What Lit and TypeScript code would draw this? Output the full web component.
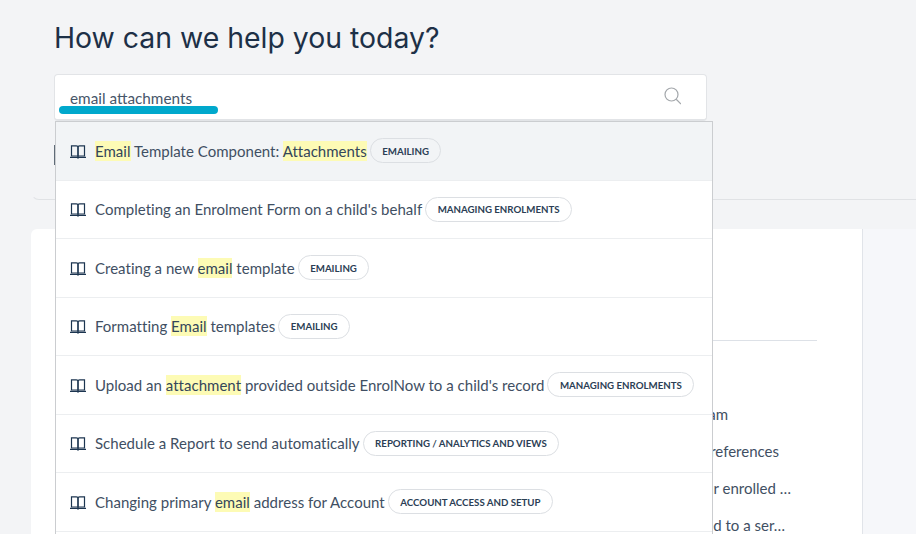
import { LitElement, css, html } from 'lit'
import { customElement } from 'lit/decorators.js'

interface Result {
	title: string
	tag: string
}

const results: Result[] = [
	{ title: 'Email Template Component: Attachments', tag: 'Emailing' },
	{ title: "Completing an Enrolment Form on a child's behalf", tag: 'Managing Enrolments' },
	{ title: 'Creating a new email template', tag: 'Emailing' },
	{ title: 'Formatting Email templates', tag: 'Emailing' },
	{ title: "Upload an attachment provided outside EnrolNow to a child's record", tag: 'Managing Enrolments' },
	{ title: 'Schedule a Report to send automatically', tag: 'Reporting / Analytics and Views' },
	{ title: 'Changing primary email address for Account', tag: 'Account Access and Setup' },
]

// end = right edge of the text on the page, the start of each line sits under the dropdown
const articles = [
	{ text: 'Enrolling a child into a program', end: 728 },
	{ text: 'Your communication preferences', end: 779 },
	{ text: 'Viewing details of your enrolled …', end: 791 },
	{ text: 'Forms that are attached to a ser…', end: 785 },
]

const bookIcon = html`
	<svg class="book" viewBox="0 0 16 14" fill="none" stroke="currentColor" stroke-width="1.2">
		<path d="M1.5 .8H6.4C7.4 .8 8 1.4 8 2.2V11H1.5z" />
		<path d="M14.5 .8H9.6C8.6 .8 8 1.4 8 2.2V11H14.5z" />
		<path d="M0 12.4H16M8 11V13.8" />
	</svg>
`

const searchIcon = html`
	<svg class="search-icon" viewBox="0 0 18 18" fill="none" stroke="currentColor" stroke-width="1.2">
		<circle cx="8.5" cy="7.5" r="6.5" />
		<path d="M13.2 12.3 18 17" />
	</svg>
`

@customElement('app-root')
export class AppRoot extends LitElement {
	static styles = css`
		:host {
			display: block;
			height: 534px;
			overflow: hidden;
			background: #f3f4f6;
			font-family: Lato, sans-serif;
			font-size: 15px;
			color: #3f4f63;
		}

		.hero {
			height: 200px;
			margin-left: 31px;
			padding: 21px 0 0 23px;
			box-sizing: border-box;
			border-bottom: 1px solid #e0e2e5;
			border-left: 1px solid transparent;
			border-bottom-left-radius: 8px;
			position: relative;
		}

		h1 {
			margin: 0 0 19px -1px;
			font-family: Inter, sans-serif;
			font-size: 28.4px;
			line-height: 34px;
			font-weight: 400;
			color: #1d3047;
		}

		.search {
			position: relative;
			width: 653px;
			height: 47px;
			margin-left: -1px;
			box-sizing: border-box;
			display: flex;
			align-items: center;
			justify-content: space-between;
			padding: 2px 25px 0 15px;
			background: #fff;
			border: 1px solid #e2e4e7;
			border-bottom-width: 2px;
			border-radius: 4px;
			font-size: 15.3px;
			color: #47566a;
		}

		.search-icon {
			width: 18px;
			height: 18px;
			margin-top: -4px;
			color: #a3a7ab;
		}

		.scribble {
			position: absolute;
			left: 4px;
			top: 31px;
			width: 159px;
			height: 8px;
			border-radius: 4px;
			background: #00a8cc;
		}

		.tab-edge {
			width: 2px;
			height: 20px;
			margin: 24px 0 0 -1px;
			background: #5f6b77;
		}

		.dropdown {
			position: absolute;
			left: 0;
			top: 46px;
			width: 658px;
			height: 440px;
			box-sizing: border-box;
			background: #fff;
			border: 1px solid #cbcdd0;
			border-bottom: none;
			font-size: 15px;
			letter-spacing: 0.02px;
			color: #3f4f63;
			z-index: 2;
		}

		.row {
			height: 58.5px;
			box-sizing: border-box;
			display: flex;
			align-items: center;
			padding-left: 14px;
			border-bottom: 1px solid #eceef0;
			white-space: nowrap;
		}

		.row.active {
			background: #f2f4f6;
		}

		.book {
			width: 16px;
			height: 14px;
			flex: none;
			margin: 2px 9px 0 0;
			color: #1c3550;
		}

		mark {
			background: #fdfbb5;
			color: #34465a;
			padding: 1px 0;
		}

		.tag {
			margin-left: 3px;
			height: 25px;
			box-sizing: border-box;
			display: flex;
			align-items: center;
			padding: 0 11.5px;
			border: 1px solid #dcdfe3;
			border-radius: 13px;
			font-size: 9.7px;
			font-weight: 700;
			letter-spacing: 0;
			text-transform: uppercase;
			color: #2b3e55;
			background: #fff;
		}

		.row.active .tag {
			background: #f2f4f6;
		}

		.lower {
			display: flex;
			margin: 29px 0 0 31px;
			height: 305px;
		}

		.card {
			width: 831px;
			flex: none;
			box-sizing: border-box;
			padding: 0 45px;
			background: #fff;
			border-top-left-radius: 6px;
		}

		.aside {
			flex: 1;
			background: #f6f7fa;
			border-left: 1px solid #e1e4e9;
		}

		.divider {
			height: 112px;
			box-sizing: border-box;
			border-bottom: 1px solid #dde1e7;
		}

		.articles {
			padding-top: 55px;
		}

		.article {
			height: 37px;
			line-height: 37px;
			white-space: nowrap;
			display: flex;
			justify-content: flex-end;
			overflow: hidden;
		}
	`

	private highlight(title: string) {
		return title.split(/(email|attachments?)/i).map((part, i) => (i % 2 ? html`<mark>${part}</mark>` : part))
	}

	render() {
		return html`
			<section class="hero">
				<h1>How can we help you today?</h1>
				<div class="search">
					<span>email attachments</span>
					${searchIcon}
					<div class="scribble"></div>
					<div class="dropdown">
						${results.map(
							(r, i) => html`
								<div class="row ${i === 0 ? 'active' : ''}">
									${bookIcon}
									<span>${this.highlight(r.title)}</span>
									<span class="tag">${r.tag}</span>
								</div>
							`
						)}
					</div>
				</div>
				<div class="tab-edge"></div>
			</section>
			<div class="lower">
				<section class="card">
					<div class="divider"></div>
					<div class="articles">
						${articles.map(a => html`<div class="article" style="width: ${a.end - 76}px">${a.text}</div>`)}
					</div>
				</section>
				<div class="aside"></div>
			</div>
		`
	}
}
